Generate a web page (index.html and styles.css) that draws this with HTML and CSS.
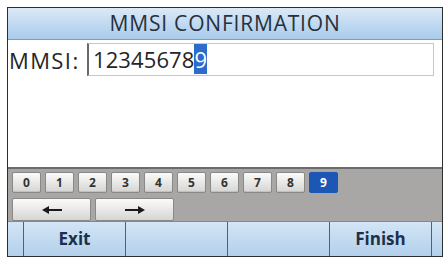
FILE: index.html
```html
<!DOCTYPE html>
<html>
<head>
<meta charset="utf-8">
<link rel="stylesheet" href="styles.css">
</head>
<body>
<div class="screen">
  <div class="title">MMSI CONFIRMATION</div>
  <div class="content">
    <div class="row">
      <span class="label">MMSI:</span>
      <div class="field">12345678<span class="cursor">9</span></div>
    </div>
  </div>
  <div class="keyboard">
    <div class="keys">
      <div class="key">0</div>
      <div class="key">1</div>
      <div class="key">2</div>
      <div class="key">3</div>
      <div class="key">4</div>
      <div class="key">5</div>
      <div class="key">6</div>
      <div class="key">7</div>
      <div class="key">8</div>
      <div class="key sel">9</div>
    </div>
    <div class="arrows">
      <div class="akey"><svg width="20" height="10" viewBox="0 0 20 10"><path d="M6 4h14v2H6z" fill="#1a1a1a"/><path d="M0 5l7-4v8z" fill="#1a1a1a"/></svg></div>
      <div class="akey"><svg width="20" height="10" viewBox="0 0 20 10"><path d="M0 4h14v2H0z" fill="#1a1a1a"/><path d="M20 5l-7-4v8z" fill="#1a1a1a"/></svg></div>
    </div>
  </div>
  <div class="footer">
    <div class="cell edge-l"></div>
    <div class="cell">Exit</div>
    <div class="cell"></div>
    <div class="cell"></div>
    <div class="cell">Finish</div>
    <div class="cell edge-r"></div>
  </div>
</div>
</body>
</html>
```
FILE: styles.css
```css
html, body {
  margin: 0;
  padding: 0;
  background: #ffffff;
}
body {
  width: 448px;
  height: 259px;
  overflow: hidden;
  font-family: "Open Sans", "Noto Sans", sans-serif;
}
.screen {
  margin: 7px 0 0 7px;
  width: 434px;
  height: 248px;
  border: 1px solid #2e2e2e;
  display: flex;
  flex-direction: column;
  background: #ffffff;
}
.title {
  height: 31px;
  background: linear-gradient(#dbe9f6, #a9cbec);
  border-bottom: 1px solid #8e9aa6;
  color: #27303c;
  font-size: 21px;
  line-height: 31px;
  text-align: center;
  letter-spacing: 0.8px;
}
.content {
  flex: 1;
  background: #ffffff;
}
.row {
  display: flex;
  align-items: center;
  padding: 3px 0 0 1px;
}
.label {
  font-size: 22px;
  color: #262626;
  width: 78px;
  letter-spacing: 1.4px;
}
.field {
  width: 340px;
  height: 31px;
  border: 1px solid #c6c6c6;
  border-left: 2px solid #6a6a6a;
  font-size: 22px;
  line-height: 31px;
  color: #262626;
  padding-left: 4px;
  letter-spacing: 0.1px;
}
.cursor {
  background: #2b6ccc;
  color: #ffffff;
}
.keyboard {
  height: 54px;
  background: #a9a7a5;
  border-top: 2px solid #6b6b6b;
  padding: 3px 0 0 4px;
  box-sizing: border-box;
}
.keys {
  display: flex;
  gap: 4px;
  height: 21px;
}
.key {
  width: 27px;
  height: 19px;
  border: 1px solid #8a8886;
  border-radius: 2px;
  background: linear-gradient(#fbfbfb, #d6d5d3);
  box-shadow: inset 0 -1px 0 #c2c1bf;
  font-size: 12px;
  font-weight: bold;
  color: #333;
  text-align: center;
  line-height: 19px;
}
.key.sel {
  background: #1d57b5;
  border-color: #1d57b5;
  box-shadow: none;
  color: #ffffff;
}
.arrows {
  display: flex;
  gap: 4px;
  margin-top: 5px;
}
.akey {
  width: 77px;
  height: 21px;
  border: 1px solid #8a8886;
  border-radius: 2px;
  background: linear-gradient(#fbfbfb, #d6d5d3);
  display: flex;
  align-items: center;
  justify-content: center;
}
.footer {
  height: 34px;
  display: flex;
  background: linear-gradient(#d3e5f6, #b3d0ec);
  border-top: 1px solid #7d8a96;
}
.cell {
  width: 101px;
  border-right: 1px solid #5a5f66;
  font-size: 17px;
  font-weight: bold;
  color: #1b3049;
  text-align: center;
  line-height: 34px;
}
.cell.edge-l {
  width: 15px;
}
.cell.edge-r {
  flex: 1;
  border-right: none;
}
```
